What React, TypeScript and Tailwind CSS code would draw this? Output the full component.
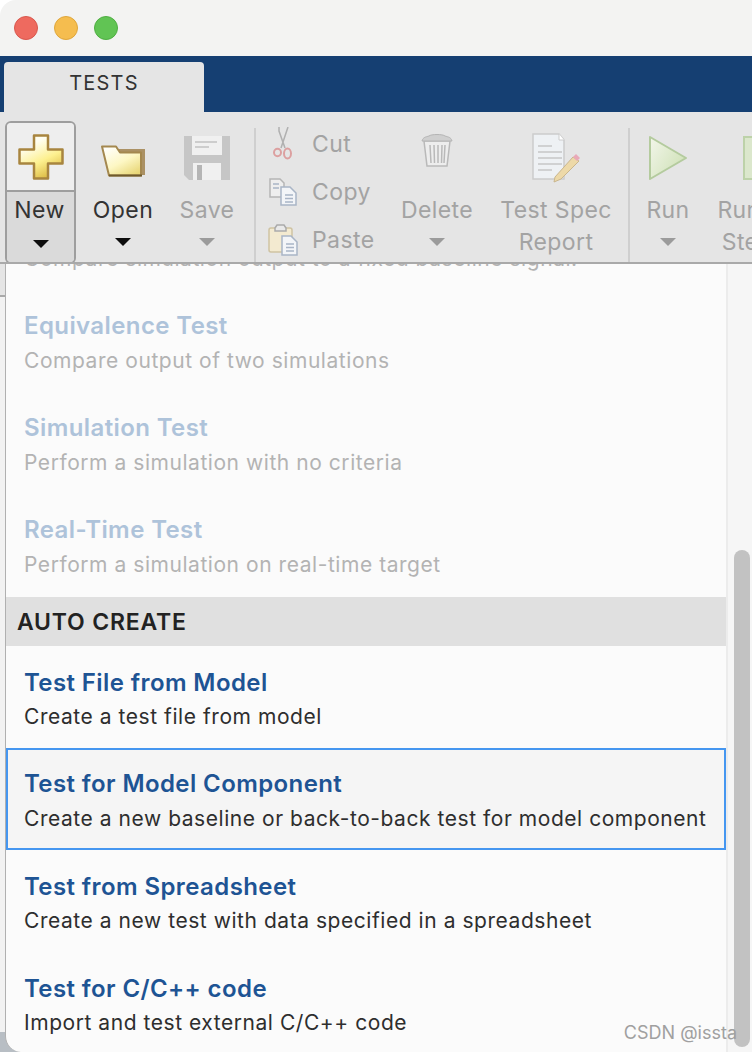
import React from 'react';

const font = { fontFamily: 'Inter, "Noto Sans", sans-serif' };

function Caret({ dim = false }: { dim?: boolean }) {
  return (
    <svg width="16" height="8" viewBox="0 0 16 8" className="block">
      <path d="M0 0h16L8 8z" fill={dim ? '#9b9b9b' : '#0d0d0d'} />
    </svg>
  );
}

function PlusIcon() {
  return (
    <svg width="46" height="46" viewBox="0 0 46 46">
      <defs>
        <linearGradient id="plusFill" x1="0.3" y1="0.2" x2="0.7" y2="1">
          <stop offset="0" stopColor="#fffef0" />
          <stop offset="0.5" stopColor="#fdf08f" />
          <stop offset="1" stopColor="#d9b53c" />
        </linearGradient>
      </defs>
      <path d="M16 1.500h14v14h14.500v14H30V44.500H16V29.500H1.500v-14H16z" fill="url(#plusFill)" stroke="#a8853f" strokeWidth="2.500" strokeLinejoin="round" />
    </svg>
  );
}

function FolderIcon() {
  return (
    <svg width="46" height="32" viewBox="0 0 46 32" className="mt-1.5">
      <defs>
        <linearGradient id="folderFill" x1="0.1" y1="0" x2="0.8" y2="1">
          <stop offset="0" stopColor="#ffffff" />
          <stop offset="0.55" stopColor="#fdf7c4" />
          <stop offset="1" stopColor="#e8d676" />
        </linearGradient>
      </defs>
      <path d="M16 4h29v26H36z" fill="#ab9164" />
      <path d="M2 1.500h14l4 6h21v23H9z" fill="url(#folderFill)" stroke="#a4884f" strokeWidth="2" strokeLinejoin="round" />
      <path d="M9 30.500h33" stroke="#6f5a2c" strokeWidth="2" />
    </svg>
  );
}

function SaveIcon() {
  return (
    <svg width="46" height="46" viewBox="0 0 46 46">
      <path d="M0 1h46v44H5l-5-5z" fill="#c6c6c6" />
      <rect x="8" y="1" width="30" height="19" fill="#f0f0f0" />
      <path d="M11 7h22M11 12h14" stroke="#cdcdcd" strokeWidth="2" />
      <rect x="9" y="28" width="28" height="17" fill="#f0f0f0" />
      <rect x="13" y="30" width="5" height="15" fill="#b5b5b5" />
    </svg>
  );
}

function ScissorsIcon() {
  return (
    <svg width="22" height="34" viewBox="0 0 22 34" fill="none">
      <path d="M16 0 9 21M7 0v4l6 17" stroke="#b0b0b0" strokeWidth="1.500" />
      <ellipse cx="5.500" cy="25.500" rx="3.500" ry="3.700" stroke="#dca0a0" strokeWidth="2" />
      <ellipse cx="15.500" cy="26.500" rx="3.500" ry="5" stroke="#dca0a0" strokeWidth="2" />
    </svg>
  );
}

function CopyIcon() {
  return (
    <svg width="28" height="28" viewBox="0 0 28 28">
      <path d="M1 1h10l4 4v14H1z" fill="#eeeeee" stroke="#b5b5b5" strokeWidth="1.500" />
      <path d="M12 9h9l6 6v12H12z" fill="#f3f5f8" stroke="#a9b5c6" strokeWidth="1.500" />
      <path d="M16 17h8M16 20.500h8M16 24h8M4 6h6M4 10h6" stroke="#a9b5c6" strokeWidth="1.500" />
    </svg>
  );
}

function PasteIcon() {
  return (
    <svg width="30" height="32" viewBox="0 0 30 32">
      <rect x="1" y="4" width="23" height="24" rx="2" fill="#f3ead0" stroke="#cfc3a3" strokeWidth="1.500" />
      <path d="M7 4l2-3h7l2 3v3H7z" fill="#e9e9e9" stroke="#aaaaaa" strokeWidth="1.500" />
      <path d="M14 12h9l6 6v13H14z" fill="#f3f5f8" stroke="#a9b5c6" strokeWidth="1.500" />
      <path d="M18 20h8M18 23.500h8M18 27h8" stroke="#a9b5c6" strokeWidth="1.500" />
    </svg>
  );
}

function TrashIcon() {
  return (
    <svg width="32" height="34" viewBox="0 0 32 34" className="-mt-4">
      <path d="M3 8h26l-3 25H6z" fill="#ededed" stroke="#b9b9b9" strokeWidth="1.500" />
      <path d="M1 8c1-4 4-4 7-5 2-2 14-2 16 0 3 1 6 1 7 5z" fill="#cfcfcf" stroke="#b5b5b5" strokeWidth="1" />
      <path d="M9 12l1 18M13 12l.5 18M17 12v18M21 12l-.5 18M24 12l-1 18" stroke="#b9b9b9" strokeWidth="1.500" />
    </svg>
  );
}

function ReportIcon() {
  return (
    <svg width="50" height="50" viewBox="0 0 50 50">
      <path d="M2 1h26l5 6v39H2z" fill="#eef1f4" stroke="#cccccc" strokeWidth="1.500" />
      <path d="M28 1v6h5" fill="#ffffff" stroke="#cccccc" strokeWidth="1" />
      <path d="M7 13h14M7 19h24M7 25h24M7 31h24M7 37h14" stroke="#c6c6c6" strokeWidth="1.500" />
      <path d="M24 44l18-20 6 4-18 18-7 3z" fill="#edd9a8" stroke="#c9b68e" strokeWidth="1" />
      <path d="M42 24l3-3 4 4-3 3z" fill="#e9a9b8" />
    </svg>
  );
}

function PlayIcon() {
  return (
    <svg width="40" height="46" viewBox="0 0 40 46">
      <defs>
        <linearGradient id="playFill" x1="0" y1="0.1" x2="1" y2="0.8">
          <stop offset="0" stopColor="#f1f5e8" />
          <stop offset="1" stopColor="#cde0b4" />
        </linearGradient>
      </defs>
      <path d="M2 2l36 21L2 44z" fill="url(#playFill)" stroke="#b4cb9e" strokeWidth="2" strokeLinejoin="round" />
    </svg>
  );
}

function BigButton({
  icon,
  label,
  second,
  dim = false,
  className = '',
}: {
  icon: React.ReactNode;
  label: string;
  second?: string;
  dim?: boolean;
  className?: string;
}) {
  const tone = dim ? 'text-[#a3a3a3]' : 'text-[#333333]';
  return (
    <div className={`flex flex-col items-center shrink-0 ${className}`}>
      <div className="h-[73px] flex items-center justify-center">{icon}</div>
      <div className={`h-8 flex items-center text-[23px] tracking-[0.4px] whitespace-nowrap ${tone}`}>{label}</div>
      <div className={`h-8 flex items-center justify-center text-[23px] tracking-[0.4px] whitespace-nowrap ${tone}`}>
        {second ? second : <Caret dim={dim} />}
      </div>
    </div>
  );
}

function SmallAction({ icon, label }: { icon: React.ReactNode; label: string }) {
  return (
    <div className="h-12 flex items-center shrink-0">
      <div className="w-[46px] flex justify-center shrink-0">{icon}</div>
      <span className="ml-1.5 text-[23px] tracking-[0.4px] text-[#a3a3a3]">{label}</span>
    </div>
  );
}

function Separator({ className = '' }: { className?: string }) {
  return <div className={`w-0.5 h-[135px] mt-[7px] bg-[#cfcfcf] shrink-0 ${className}`} />;
}

function ListRow({ title, desc, dim = false, selected = false }: { title: string; desc: string; dim?: boolean; selected?: boolean }) {
  const box = selected
    ? 'border-2 border-[#4596f0] bg-[#f5f5f5] pl-[16px] pt-[17px]'
    : dim
      ? 'pl-[18px] pt-[18px]'
      : 'pl-[18px] pt-[20px]';
  return (
    <div className={`h-[102px] shrink-0 ${box}`}>
      <div className={`h-[34px] flex items-center text-[24px] font-semibold tracking-[0.4px] whitespace-nowrap ${dim ? 'text-[#aec3da]' : 'text-[#1e5494]'}`}>{title}</div>
      <div className={`h-[34px] flex items-center text-[21px] tracking-[0.55px] whitespace-nowrap ${dim || selected ? 'mt-px' : ''} ${dim ? 'text-[#b3b3b3]' : 'text-[#2e2e2e]'}`}>{desc}</div>
    </div>
  );
}

export default function App() {
  return (
    <div className="relative w-[752px] h-[1052px] overflow-hidden bg-[#f3f3f2] rounded-tl-2xl flex flex-col" style={font}>
      {/* Title bar */}
      <div className="h-14 flex items-center gap-4 pl-3.5 shrink-0">
        <div className="w-6 h-6 rounded-full bg-[#ee6a5f] border border-[#d8584e]" />
        <div className="w-6 h-6 rounded-full bg-[#f5bd4f] border border-[#dea63c]" />
        <div className="w-6 h-6 rounded-full bg-[#61c454] border border-[#4fae43]" />
      </div>

      {/* Tab strip */}
      <div className="h-14 bg-[#153f72] pt-1.5 pl-1 shrink-0">
        <div className="w-[200px] h-[50px] rounded-t bg-[#e5e5e5] flex items-center justify-center pb-2 text-[20px] tracking-[1.2px] text-[#333333]">TESTS</div>
      </div>

      {/* Toolstrip */}
      <div className="h-[152px] bg-[#e5e5e5] border-b-2 border-[#a9a9a9] flex pl-[5px] pt-[9px] overflow-hidden shrink-0">
        <div className="w-[71px] h-[143px] shrink-0 rounded-md border-2 border-[#9e9e9e] overflow-hidden flex flex-col">
          <div className="h-[69px] bg-[#eeeeee] border-b-2 border-[#9e9e9e] flex items-center justify-center shrink-0">
            <PlusIcon />
          </div>
          <div className="flex-1 bg-[#dadada] flex flex-col items-center">
            <div className="h-9 -ml-0.5 flex items-center text-[23px] tracking-[0.4px] text-[#333333]">New</div>
            <div className="h-8 flex items-center"><Caret /></div>
          </div>
        </div>
        <BigButton icon={<FolderIcon />} label="Open" className="w-[94px]" />
        <BigButton icon={<SaveIcon />} label="Save" dim className="w-[74px]" />
        <Separator className="ml-[10px]" />
        <div className="w-[135px] flex flex-col -mt-px shrink-0 ml-[4px]">
          <SmallAction icon={<ScissorsIcon />} label="Cut" />
          <SmallAction icon={<CopyIcon />} label="Copy" />
          <SmallAction icon={<PasteIcon />} label="Paste" />
        </div>
        <BigButton icon={<TrashIcon />} label="Delete" dim className="w-[90px] -ml-[3px]" />
        <BigButton icon={<ReportIcon />} label="Test Spec" second="Report" dim className="w-[130px] ml-[9px]" />
        <Separator className="ml-[7px]" />
        <BigButton icon={<PlayIcon />} label="Run" dim className="w-[76px]" />
        <BigButton icon={<div className="w-10 h-11 -ml-[6px] bg-[#dbe7cc] border-2 border-[#bdd2a9]" />} label="Run with" second="Stepper" dim className="w-[100px] ml-[10px]" />
      </div>

      {/* Popup list and the scroll track */}
      <div className="relative flex-1 min-h-0 flex bg-[#f6f6f6]">
        <div className="w-[5px] shrink-0 flex flex-col bg-[#f2f2f2]">
          <div className="h-[33px] bg-[#e5e5e5] border-b-2 border-[#a9a9a9]" />
        </div>
        {/* desktop showing behind the popup's rounded corner */}
        <div className="absolute left-0 bottom-0 w-5 h-5 bg-[#b8bec4]" />
        <div className="relative w-[723px] shrink-0 bg-[#fbfbfb] border-l border-r-2 border-l-[#b0b0b0] border-r-[#ececec] overflow-hidden rounded-bl-2xl flex flex-col">
          <div className="-mt-[75px] flex flex-col">
            <ListRow dim title="Baseline Test" desc="Compare simulation output to a fixed baseline signal." />
            <ListRow dim title="Equivalence Test" desc="Compare output of two simulations" />
            <ListRow dim title="Simulation Test" desc="Perform a simulation with no criteria" />
            <ListRow dim title="Real-Time Test" desc="Perform a simulation on real-time target" />
            <div className="h-[49px] bg-[#e0e0e0] pl-[11px] pt-0.5 flex items-center text-[23px] font-semibold tracking-[0.8px] text-[#222222] shrink-0">AUTO CREATE</div>
            <ListRow title="Test File from Model" desc="Create a test file from model" />
            <ListRow selected title="Test for Model Component" desc="Create a new baseline or back-to-back test for model component" />
            <ListRow title="Test from Spreadsheet" desc="Create a new test with data specified in a spreadsheet" />
            <ListRow title="Test for C/C++ code" desc="Import and test external C/C++ code" />
          </div>
        </div>
        <div className="flex-1 pl-1.5">
          <div className="mt-[286px] w-4 h-[497px] rounded-full bg-[#c2c2c2]" />
        </div>
      </div>

      {/* Watermark */}
      <div className="absolute right-[15px] bottom-[6px] text-[18px] text-[#a0a0a0]">CSDN @issta</div>
    </div>
  );
}
